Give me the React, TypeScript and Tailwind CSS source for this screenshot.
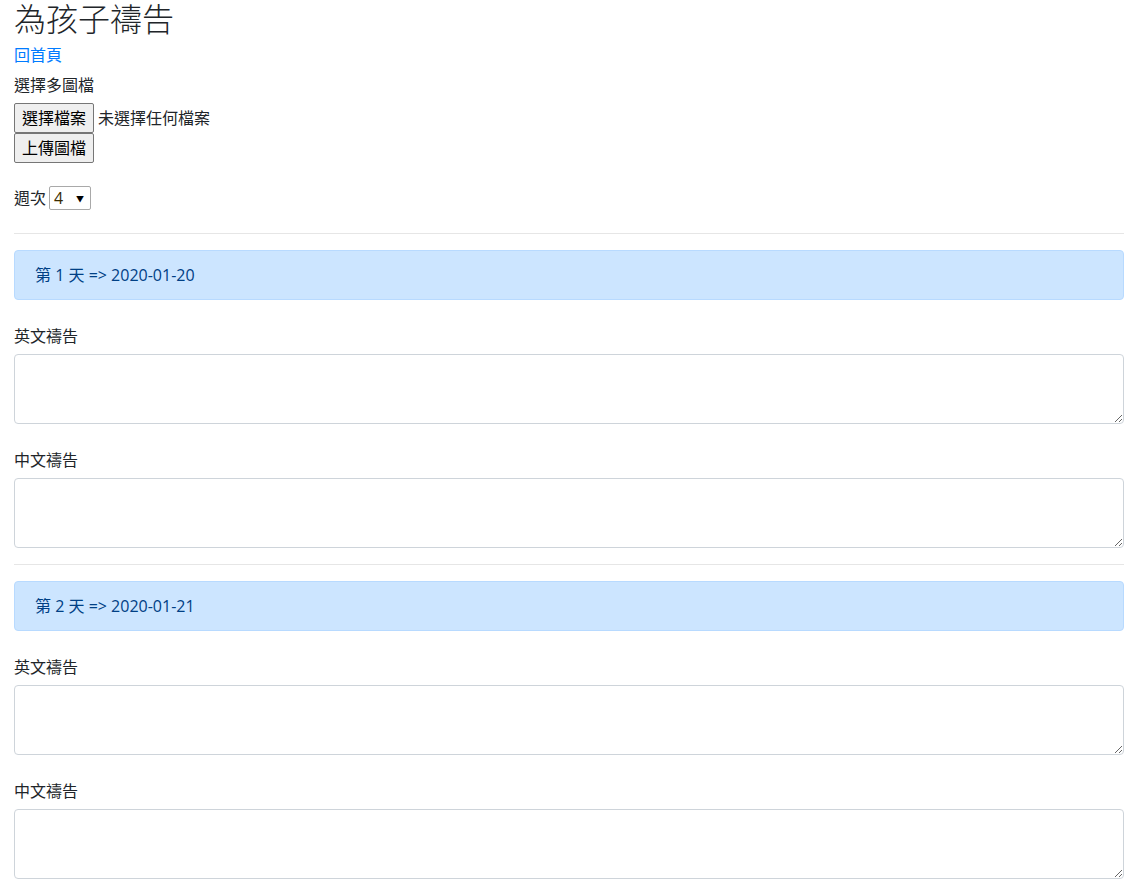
import React from "react";

const font = { fontFamily: '"Segoe UI", "Open Sans", "Noto Sans CJK TC", sans-serif' };

function Day({ n, date }: { n: number; date: string }) {
  return (
    <div>
      <div className="h-px bg-[#e6e6e6] mt-4" />
      <div className="mt-4 h-[50px] rounded-[4px] border border-[#b8daff] bg-[#cce5ff] px-5 flex items-center text-[#004085] text-[16px]">
        第 {n} 天 =&gt; {date}
      </div>
      <div className="mt-[24px]">
        <div className="h-6 leading-6 mb-[6px] text-[16px]">英文禱告</div>
        <textarea className="block w-full h-[70px] rounded-[4px] border border-[#ced4da] bg-white outline-none" />
      </div>
      <div className="mt-[24px]">
        <div className="h-6 leading-6 mb-[6px] text-[16px]">中文禱告</div>
        <textarea className="block w-full h-[70px] rounded-[4px] border border-[#ced4da] bg-white outline-none" />
      </div>
    </div>
  );
}

export default function App() {
  return (
    <div className="bg-white text-[#212529] min-h-screen" style={font}>
      <div className="pl-[14px] w-[1124px]">
        <h2 className="text-[32px] leading-[38px] font-light text-[#212529]">為孩子禱告</h2>
        <a className="block mt-[5px] text-[16px] leading-6 text-[#007bff]" href="#">回首頁</a>
        <div className="mt-[6px] text-[16px] leading-6">選擇多圖檔</div>
        <div className="mt-[6px] flex items-center gap-[4px]">
          <button className="h-[30px] w-[80px] border border-[#767676] rounded-[2px] bg-[#efefef] text-[16px] text-black leading-none">選擇檔案</button>
          <span className="text-[16px]">未選擇任何檔案</span>
        </div>
        <button className="block h-[30px] w-[80px] border border-[#767676] rounded-[2px] bg-[#efefef] text-[16px] text-black leading-none">上傳圖檔</button>
        <div className="mt-[23px] flex items-center text-[16px]">
          <span>週次</span>
          <span className="ml-[3px] relative h-[24px] w-[42px] border border-[#a9a9a9] rounded-[2px] bg-white flex items-center pl-[4px] text-[#3a2a00]">
            4
            <span className="absolute right-[6px] top-[6px] text-[8px] text-black">▼</span>
          </span>
        </div>
        <div className="mt-[23px]" />
        <Day n={1} date="2020-01-20" />
        <Day n={2} date="2020-01-21" />
        <div className="h-10" />
      </div>
    </div>
  );
}
